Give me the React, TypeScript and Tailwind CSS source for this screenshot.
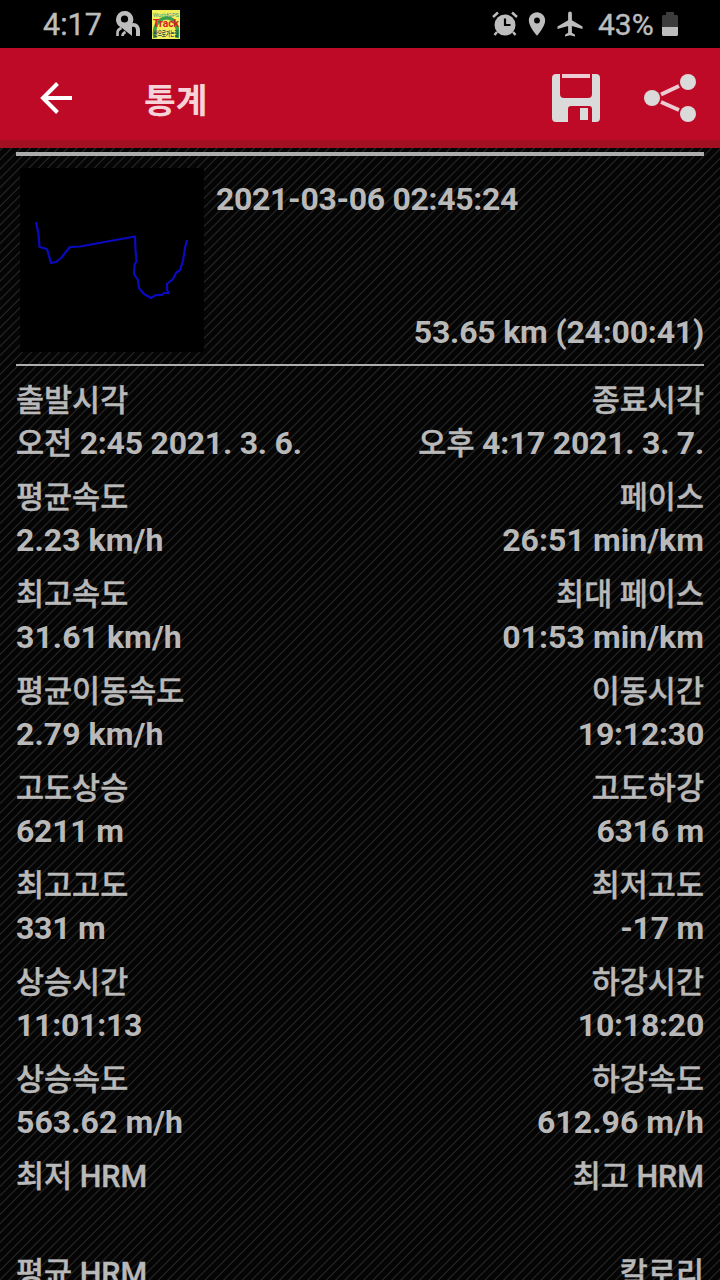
import { MdLocationOn, MdAirplanemodeActive } from "react-icons/md";
import clsx from "clsx";

interface StatRow {
  left: string;
  leftValue: string;
  leftPrefix?: string;
  right: string;
  rightValue: string;
  rightPrefix?: string;
}

const rows: StatRow[] = [
  {
    left: "출발시각",
    leftPrefix: "오전",
    leftValue: "2:45 2021. 3. 6.",
    right: "종료시각",
    rightPrefix: "오후",
    rightValue: "4:17 2021. 3. 7.",
  },
  { left: "평균속도", leftValue: "2.23 km/h", right: "페이스", rightValue: "26:51 min/km" },
  { left: "최고속도", leftValue: "31.61 km/h", right: "최대 페이스", rightValue: "01:53 min/km" },
  { left: "평균이동속도", leftValue: "2.79 km/h", right: "이동시간", rightValue: "19:12:30" },
  { left: "고도상승", leftValue: "6211 m", right: "고도하강", rightValue: "6316 m" },
  { left: "최고고도", leftValue: "331 m", right: "최저고도", rightValue: "-17 m" },
  { left: "상승시간", leftValue: "11:01:13", right: "하강시간", rightValue: "10:18:20" },
  { left: "상승속도", leftValue: "563.62 m/h", right: "하강속도", rightValue: "612.96 m/h" },
  { left: "최저 HRM", leftValue: "", right: "최고 HRM", rightValue: "" },
  { left: "평균 HRM", leftValue: "", right: "칼로리", rightValue: "" },
];

function StatusBar() {
  return (
    <div className="flex h-12 shrink-0 items-center bg-black pl-[43px] pr-[42px] text-[#bdbdbd]">
      <span className="w-[60px] pt-0.5 text-[30.500px] leading-none [-webkit-text-stroke:0.4px]">4:17</span>
      {/* location service */}
      <svg className="ml-3 h-[26px] w-[26px]" viewBox="0 0 26 26">
        <path d="M15 13c5-3 10 1 10 6v6h-4v-6c0-3-2-4-4-3z" fill="#bdbdbd" />
        <path d="M2.500 25v-3c0-2 1-4 4-5M7.500 25c0-2 1-3 3-4" fill="none" stroke="#bdbdbd" strokeWidth="2.600" />
        <path d="M9.500 0A8.500 8.500 0 0 0 1 8.500c0 4 2.500 7 6 8.500l10 8V13a8.500 8.500 0 0 0-7.500-13z" fill="#bdbdbd" />
        <circle cx="9.500" cy="8" r="3.600" fill="#000" />
      </svg>
      {/* app icon */}
      <svg className="ml-[11px] h-[29px] w-[28px]" viewBox="0 0 28 29">
        <rect width="28" height="29" fill="#f3ee5c" />
        <path d="M3 28C1 18 5 9 14 8s13 10 11 20" fill="none" stroke="#3f9d4a" strokeWidth="3.500" />
        <text x="1" y="6.500" fontSize="6" textLength="26" lengthAdjust="spacingAndGlyphs" fill="#1e9c93">WorldGPS</text>
        <text x="1" y="17" fontSize="10" fontWeight="700" textLength="26" lengthAdjust="spacingAndGlyphs" fill="#d81e1e">Track</text>
        <text x="1.500" y="26" fontSize="7" fontWeight="700" textLength="25" lengthAdjust="spacingAndGlyphs" fill="#1c4a54">산으로가는길</text>
      </svg>
      <div className="ml-auto flex items-center">
        <svg className="h-[26px] w-[26px]" viewBox="0 0 26 26">
          <circle cx="13" cy="14" r="10.500" fill="#bdbdbd" />
          <path d="M1 6l5-4.500M25 6l-5-4.500M5 21l-2.500 3M21 21l2.500 3" stroke="#bdbdbd" strokeWidth="2.500" />
          <path d="M13 7.500V14h5.500" fill="none" stroke="#000" strokeWidth="2.200" />
        </svg>
        <MdLocationOn className="ml-[5px] size-[28px]" />
        <MdAirplanemodeActive className="ml-[4px] size-[30px]" />
        <span className="ml-[13px] w-[57px] pt-0.5 text-[30px] leading-none [-webkit-text-stroke:0.4px]">43%</span>
        <svg className="ml-[7px] h-6 w-4" viewBox="0 0 16 24">
          <path d="M4 0h8v3h3l1 1v11H0V4l1-1h3z" fill="#3c3c3c" />
          <path d="M0 15h16v8l-1 1H1l-1-1z" fill="#bdbdbd" />
        </svg>
      </div>
    </div>
  );
}

function AppBar() {
  return (
    <div className="flex h-[100px] shrink-0 items-center border-b-8 border-[#a31021] bg-[#be0a26] pl-10 pr-6 pt-2">
      <svg className="h-8 w-8" viewBox="0 0 32 32">
        <path d="M32 16H3M17.500 1.500L3 16l14.500 14.500" fill="none" stroke="#fff" strokeWidth="4" />
      </svg>
      <h1 className="ml-[72px] pt-1.5 text-[34.500px] font-bold leading-none text-[#f6d3d9]">통계</h1>
      <svg className="ml-auto h-12 w-12" viewBox="0 0 48 48">
        <path
          d="M4 0h4v20a4 4 0 0 0 4 4h24a4 4 0 0 0 4-4V0h4a4 4 0 0 1 4 4v40a4 4 0 0 1-4 4h-4V35a3 3 0 0 0-3-3H19a3 3 0 0 0-3 3v13H4a4 4 0 0 1-4-4V4a4 4 0 0 1 4-4z"
          fill="#dadada"
        />
        <path d="M10 0h28v4H10z" fill="#ecccd2" />
        <path d="M28 34h8v12h-8z" fill="#dadada" />
      </svg>
      <svg className="ml-11 h-12 w-[52px]" viewBox="0 0 52 48">
        <path d="M17 20.500l18-8.500M17 28l18 8" stroke="#ecccd2" strokeWidth="4" />
        <circle cx="8" cy="24" r="8" fill="#dadada" />
        <circle cx="44" cy="8" r="8" fill="#dadada" />
        <circle cx="44" cy="40" r="8" fill="#dadada" />
      </svg>
    </div>
  );
}

function TrackSummary() {
  return (
    <section className="flex h-[214px] justify-between border-b-2 border-t-4 border-[#adadad] pl-1 pt-3">
      <svg className="h-[184px] w-[184px] bg-black" viewBox="20 168 184 184">
        <polyline
          points="36,222 38.5,234 39.5,247 47,249 51,263 56,262 61,258 70,247 80,246.5 110,241 135,236.5 135.5,250 136.5,261 134.5,265 134,274 138,280 139,288 144,294 151,298 156,295 162,295 164,293 169,293 167,290 167,284 173,279 176,273 180,270 183,261 185,248 187,240"
          fill="none"
          stroke="#0a0ac0"
          strokeWidth="2.200"
          strokeLinejoin="round"
        />
      </svg>
      <div className="flex flex-1 flex-col justify-between pb-[13px] pl-3 text-[32px] font-bold leading-[38px]">
        <p className="mt-3 tracking-[-0.33px]">2021-03-06 02:45:24</p>
        <p className="text-right tracking-[-0.2px]">53.65 km (24:00:41)</p>
      </div>
    </section>
  );
}

function StatValue({ prefix, value }: { prefix?: string; value: string }) {
  return (
    <span className={clsx(value.includes("/") ? "tracking-[0.05px]" : "tracking-[-0.25px]", prefix && "pt-0.5")}>
      {prefix && (
        <span className="text-[30.500px] font-medium tracking-normal [-webkit-text-stroke:0.5px]">{prefix} </span>
      )}
      {value}
    </span>
  );
}

export default function App() {
  return (
    <div className="flex h-[1280px] w-[720px] flex-col overflow-hidden bg-[#040404] font-['Roboto','Noto_Sans_CJK_KR',sans-serif] text-[#b9b9b9]">
      <StatusBar />
      <AppBar />
      <main className="min-h-0 flex-1 overflow-hidden bg-[repeating-linear-gradient(135deg,#050505_0px,#050505_0.600px,#202020_1.300px,#202020_2px,#050505_2.700px,#050505_6.600px)] px-4 pt-1">
        <TrackSummary />
        <div className="pt-[13px]">
          {rows.map((row) => (
            <div key={row.left} className="h-[97px]">
              <div className="flex h-[42px] items-center justify-between pt-[3px] text-[30.500px] font-medium leading-none [-webkit-text-stroke:0.4px]">
                <span>{row.left}</span>
                <span>{row.right}</span>
              </div>
              <div className="flex h-[43px] items-center justify-between text-[32px] font-bold leading-none">
                <StatValue prefix={row.leftPrefix} value={row.leftValue} />
                <StatValue prefix={row.rightPrefix} value={row.rightValue} />
              </div>
            </div>
          ))}
        </div>
      </main>
    </div>
  );
}
